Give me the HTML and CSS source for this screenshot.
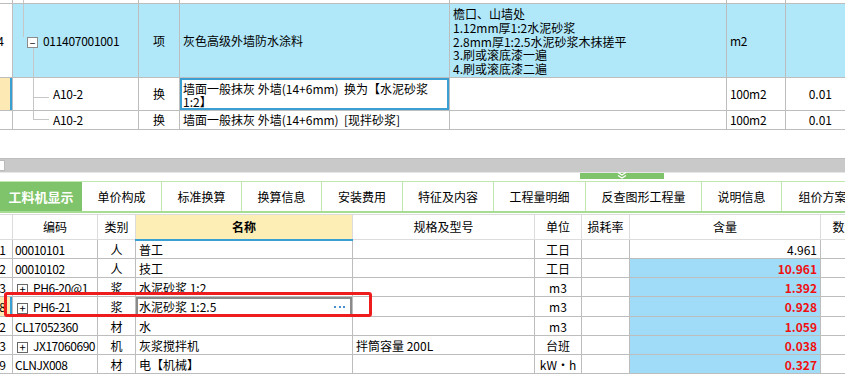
FILE: index.html
```html
<!DOCTYPE html>
<html lang="zh-CN">
<head>
  <meta charset="UTF-8" />
  <title>清单定额 - 工料机显示</title>
  <link rel="stylesheet" href="styles.css">
</head>
<body>
  <div class="upper">
    <table class="grid bill">
      <colgroup>
        <col class="c-no"><col class="c-code"><col class="c-kind"><col class="c-name">
        <col class="c-feat"><col class="c-unit"><col class="c-qty">
      </colgroup>
      <tr class="prev">
        <td></td><td class="code tree-top"></td><td></td><td></td><td></td><td></td><td></td>
      </tr>
      <tr class="main">
        <td class="no">4</td>
        <td class="code tree-head"><span class="box">−</span><span class="latin">011407001001</span></td>
        <td class="center">项</td>
        <td>灰色高级外墙防水涂料</td>
        <td class="feat">檐口、山墙处<br>1.12mm厚1:2水泥砂浆<br>2.8mm厚1:2.5水泥砂浆木抹搓平<br>3.刷或滚底漆一遍<br>4.刷或滚底漆二遍</td>
        <td class="latin">m2</td>
        <td></td>
      </tr>
      <tr class="sub">
        <td class="no current"></td>
        <td class="code tree-mid latin">A10-2</td>
        <td class="center">换</td>
        <td class="edit-cell"><div class="edit">墙面一般抹灰 外墙(14+6mm)&nbsp;&nbsp;换为【水泥砂浆<br>1:2】</div></td>
        <td></td>
        <td class="latin">100m2</td>
        <td class="num">0.01</td>
      </tr>
      <tr class="sub2">
        <td class="no"></td>
        <td class="code tree-end latin">A10-2</td>
        <td class="center">换</td>
        <td>墙面一般抹灰 外墙(14+6mm)&nbsp;&nbsp;[现拌砂浆]</td>
        <td></td>
        <td class="latin">100m2</td>
        <td class="num">0.01</td>
      </tr>
    </table>
  </div>

  <div class="hscroll"><span class="hs-end"></span></div>
  <div class="split">
    <span class="handle">
      <svg width="12" height="7" viewBox="0 0 12 7"><path d="M2 0.5 L6 3 L10 0.5 M2 3.5 L6 6 L10 3.5" fill="none" stroke="#fff" stroke-width="1.2"/></svg>
    </span>
  </div>

  <div class="tabs">
    <div class="tab active">工料机显示</div>
    <div class="tab w80">单价构成</div>
    <div class="tab w80">标准换算</div>
    <div class="tab w80">换算信息</div>
    <div class="tab w81">安装费用</div>
    <div class="tab w91">特征及内容</div>
    <div class="tab w92">工程量明细</div>
    <div class="tab w116">反查图形工程量</div>
    <div class="tab w80">说明信息</div>
    <div class="tab w82">组价方案</div>
  </div>

  <div class="lower">
    <table class="grid parts">
      <colgroup>
        <col class="p-no"><col class="p-code"><col class="p-kind"><col class="p-name"><col class="p-spec">
        <col class="p-unit"><col class="p-loss"><col class="p-amt"><col class="p-cnt">
      </colgroup>
      <tr class="head">
        <th></th><th>编码</th><th>类别</th><th class="sorted">名称</th><th>规格及型号</th>
        <th>单位</th><th>损耗率</th><th>含量</th><th>数量</th>
      </tr>
      <tr>
        <td class="no">1</td><td class="pcode">00010101</td><td class="center">人</td><td>普工</td><td></td>
        <td class="center">工日</td><td></td><td class="amt">4.961</td><td></td>
      </tr>
      <tr>
        <td class="no">2</td><td class="pcode">00010102</td><td class="center">人</td><td>技工</td><td></td>
        <td class="center">工日</td><td></td><td class="amt changed">10.961</td><td></td>
      </tr>
      <tr>
        <td class="no">3</td><td class="pcode"><span class="plus">+</span>PH6-20@1</td><td class="center">浆</td><td>水泥砂浆 1:2</td><td></td>
        <td class="center">m3</td><td></td><td class="amt changed">1.392</td><td></td>
      </tr>
      <tr>
        <td class="no current">8</td><td class="pcode"><span class="plus">+</span>PH6-21</td><td class="center">浆</td>
        <td class="pick-cell"><div class="pick"><span>水泥砂浆 1:2.5</span><span class="dots"></span></div></td><td></td>
        <td class="center">m3</td><td></td><td class="amt changed">0.928</td><td></td>
      </tr>
      <tr>
        <td class="no">2</td><td class="pcode">CL17052360</td><td class="center">材</td><td>水</td><td></td>
        <td class="center">m3</td><td></td><td class="amt changed">1.059</td><td></td>
      </tr>
      <tr>
        <td class="no">3</td><td class="pcode"><span class="plus">+</span>JX17060690</td><td class="center">机</td><td>灰浆搅拌机</td><td>拌筒容量 200L</td>
        <td class="center">台班</td><td></td><td class="amt changed">0.038</td><td></td>
      </tr>
      <tr>
        <td class="no">9</td><td class="pcode">CLNJX008</td><td class="center">材</td><td>电【机械】</td><td></td>
        <td class="center">kW·h</td><td></td><td class="amt changed">0.327</td><td></td>
      </tr>
    </table>
    <div class="mark"></div>
  </div>
</body>
</html>
```

FILE: styles.css
```css
* {
  box-sizing: border-box;
}
body {
  margin: 0;
  width: 845px;
  height: 382px;
  overflow: hidden;
  background: #fff;
  color: #000;
  font-family: "Noto Sans CJK SC", "DejaVu Sans", sans-serif;
  font-size: 12px;
}
.grid {
  border-collapse: collapse;
  table-layout: fixed;
}
.grid td,
.grid th {
  border: 1px solid #bdbdbd;
  padding: 0 3px;
  white-space: nowrap;
  overflow: hidden;
  line-height: 14px;
  font-weight: normal;
  text-align: left;
}
.center {
  text-align: center !important;
}
.num {
  text-align: right !important;
  padding-right: 13px !important;
}
.latin {
  letter-spacing: -0.3px;
}

/* upper bill table */
.upper {
  height: 130px;
  overflow: hidden;
}
.bill {
  margin: -17px 0 0 -12px;
  width: 857px;
}
.c-no { width: 24px; }
.c-code { width: 126px; }
.c-kind { width: 41px; }
.c-name { width: 270px; }
.c-feat { width: 277px; }
.c-unit { width: 59px; }
.c-qty { width: 60px; }
.bill .prev { height: 20px; }
.bill .main { height: 74px; }
.bill .sub { height: 33px; }
.bill .sub2 { height: 19px; }
.bill .main td {
  background-color: #b0e8f9;
}
.bill .main td.no {
  background-color: #fff;
}
.bill td.no {
  text-align: right;
  padding-right: 8px;
}
.no.current {
  background: linear-gradient(#3aa0d4, #3aa0d4) right 0 / 2px 100% no-repeat, #fde9b3 !important;
}
.feat {
  vertical-align: top;
  padding-top: 3px !important;
  line-height: 13.8px !important;
}
.code {
  padding-left: 14px !important;
}
.tree-top {
  background: linear-gradient(#c6c6c6, #c6c6c6) 10px 0 / 1px 100% no-repeat;
}
.tree-head {
  background-image: linear-gradient(#c6c6c6, #c6c6c6), linear-gradient(#c6c6c6, #c6c6c6);
  background-position: 10px 0, 20px 44px;
  background-size: 1px 33px, 1px 40px;
  background-repeat: no-repeat;
}
.tree-mid,
.tree-end {
  padding-left: 40px !important;
  background-image: linear-gradient(#c6c6c6, #c6c6c6), linear-gradient(#c6c6c6, #c6c6c6);
  background-repeat: no-repeat;
}
.tree-mid {
  background-position: 20px 0, 20px 19px;
  background-size: 1px 100%, 16px 1px;
}
.tree-end {
  background-position: 20px 0, 20px 8px;
  background-size: 1px 9px, 16px 1px;
}
.box {
  display: inline-block;
  width: 11px;
  height: 11px;
  border: 1px solid #8c8c8c;
  background: #fff;
  margin-right: 5px;
  font-size: 10px;
  line-height: 9px;
  text-align: center;
  vertical-align: -1px;
  letter-spacing: 0;
}
.edit-cell {
  padding: 0 !important;
}
.edit {
  border: 2px solid #3aa0d4;
  height: 32px;
  padding: 2px 1px;
  line-height: 13px;
}

/* horizontal scrollbar and splitter */
.hscroll {
  margin-top: 28px;
  height: 15px;
  background: #c9c9c9;
  border-top: 1px solid #bdbdbd;
  border-bottom: 1px solid #e6e6e6;
  padding-top: 1px;
}
.hs-end {
  display: block;
  width: 5px;
  height: 11px;
  background: #fff;
  border: 1px solid #bbb;
  border-left: 0;
}
.split {
  height: 8px;
}
.handle {
  display: flex;
  justify-content: center;
  margin-left: 580px;
  width: 84px;
  height: 6px;
  background: #7fc46a;
}
.handle svg {
  margin-top: -1px;
}

/* tab strip */
.tabs {
  display: flex;
  height: 32px;
  border-top: 1px solid #bfe7ae;
  border-bottom: 2px solid #a6dc93;
  overflow: hidden;
}
.tab {
  flex: none;
  display: flex;
  align-items: center;
  justify-content: center;
  border-right: 1px solid #bfe7ae;
  font-size: 12px;
  white-space: nowrap;
}
.tab.active {
  width: 82px;
  background: #7fc46a;
  color: #fff;
  font-weight: bold;
  font-size: 13px;
  border-right: 0;
}
.w80 { width: 80px; }
.w81 { width: 81px; }
.w82 { width: 82px; }
.w91 { width: 91px; }
.w92 { width: 92px; }
.w116 { width: 116px; }

/* lower parts table */
.lower {
  position: relative;
  margin-top: 1px;
}
.parts {
  margin-left: -12px;
  width: 880px;
}
.p-no { width: 24px; }
.p-code { width: 85px; }
.p-kind { width: 38px; }
.p-name { width: 217px; }
.p-spec { width: 182px; }
.p-unit { width: 47px; }
.p-loss { width: 48px; }
.p-amt { width: 191px; }
.p-cnt { width: 48px; }
.parts .head {
  height: 25px;
}
.parts .head th {
  border-color: #dcdcdc;
  text-align: center;
}
.parts .head th.sorted {
  background: #fdeeb5;
  font-weight: bold;
  border-bottom: 2px solid #3aa0d4;
}
.parts tr {
  height: 19px;
}
.parts td {
  line-height: 17px;
}
.parts td.no {
  text-align: right;
  padding-right: 6px;
}
.parts td.pcode {
  padding-left: 2px;
  letter-spacing: -0.45px;
}
.plus {
  display: inline-block;
  width: 11px;
  height: 11px;
  border: 1px solid #666;
  margin: 0 5px 0 2px;
  font-size: 11px;
  line-height: 8px;
  text-align: center;
  vertical-align: -1px;
  letter-spacing: 0;
}
.amt {
  text-align: right !important;
  padding-right: 3px !important;
}
.amt.changed {
  background: #a0dbf8;
  color: #f01010;
  font-weight: bold;
}
.pick-cell {
  padding: 0 !important;
}
.pick {
  display: flex;
  justify-content: space-between;
  align-items: center;
  height: 19px;
  border: 2px solid #8a8a8a;
  padding: 0 5px 0 1px;
}
.dots {
  width: 11px;
  height: 2px;
  margin-top: 1px;
  background: repeating-linear-gradient(90deg, #4a8fd0 0 2px, transparent 2px 4.5px);
}
.mark {
  position: absolute;
  left: 4px;
  top: 78px;
  width: 368px;
  height: 25px;
  border: 3px solid #ee1c1c;
  border-radius: 3px;
}
```
